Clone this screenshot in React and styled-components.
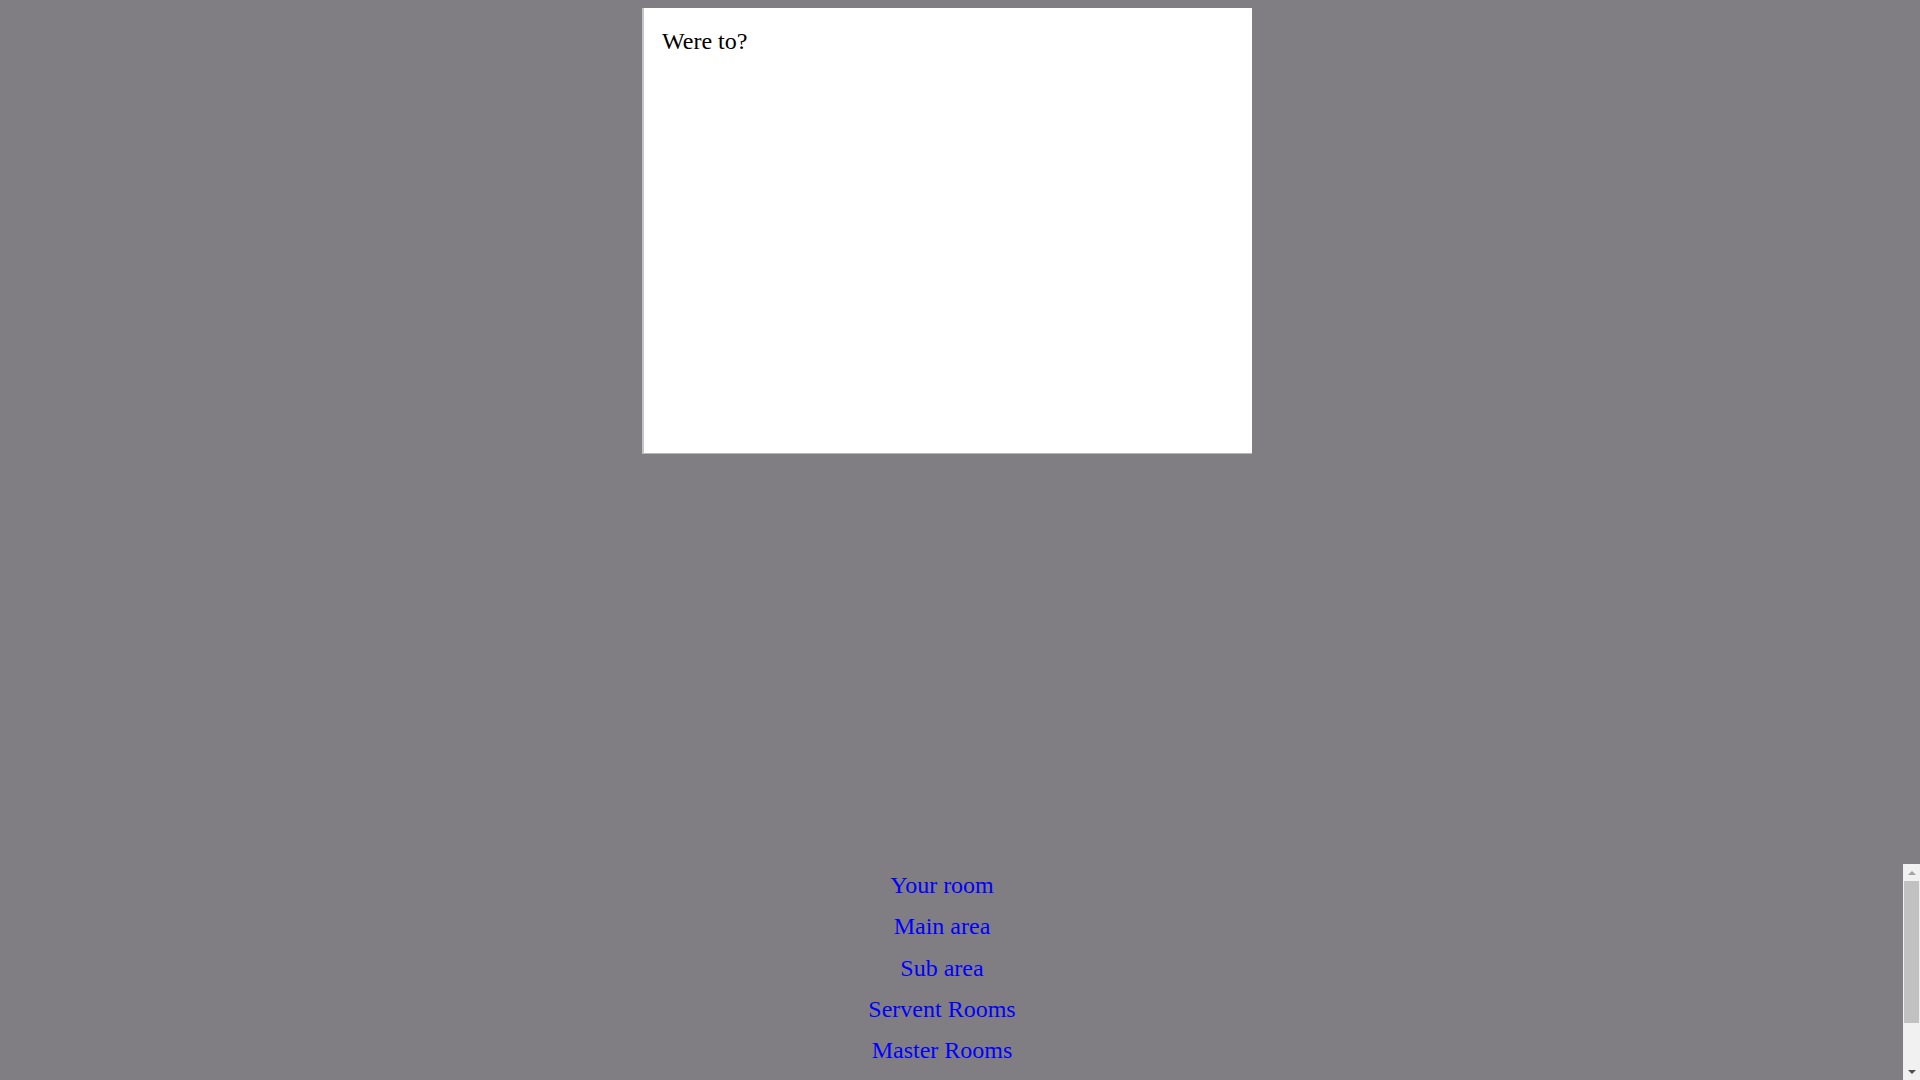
import React from "react";
import styled, { createGlobalStyle } from "styled-components";

const GlobalStyle = createGlobalStyle`
  html, body {
    margin: 0;
    padding: 0;
    height: 100%;
    overflow: hidden;
    background: #807e82;
  }
  #root {
    height: 100%;
  }
`;

const Page = styled.div`
  height: 100vh;
  display: flex;
  flex-direction: column;
  background: #807e82;
  font-family: "Liberation Serif", "Times New Roman", serif;
`;

const Panel = styled.section`
  box-sizing: border-box;
  margin: 8px 0 0 642px;
  width: 610px;
  height: 446px;
  padding: 20px 18px;
  background: #ffffff;
  border-left: 2px solid #c4c4c6;
  border-bottom: 1px solid #b6b5b8;
`;

const Prompt = styled.p`
  margin: 0;
  font-size: 24px;
  color: #000000;
`;

const Spacer = styled.div`
  flex: 1;
`;

const ScrollRegion = styled.div`
  flex: 0 0 216px;
  height: 216px;
  display: flex;
`;

const ScrollContent = styled.nav`
  flex: 1;
  overflow: hidden;
`;

const LinkList = styled.div`
  display: flex;
  flex-direction: column;
  align-items: center;
  padding: 1px 19px 70px 0;
`;

const RoomLink = styled.a`
  font-size: 24px;
  line-height: 41.3px;
  color: #0000ff;
  text-decoration: none;
  cursor: pointer;
`;

const ScrollBar = styled.div`
  flex: 0 0 17px;
  width: 17px;
  display: flex;
  flex-direction: column;
  background: #f1f1f1;
`;

const ArrowButton = styled.div`
  flex: 0 0 17px;
  height: 17px;
  display: flex;
  align-items: center;
  justify-content: center;
  background: #f1f1f1;
`;

const Arrow = styled.span`
  width: 0;
  height: 0;
  border-left: 4px solid transparent;
  border-right: 4px solid transparent;
  ${(p) =>
    p.$up
      ? `border-bottom: 4px solid ${p.$color};`
      : `border-top: 4px solid ${p.$color};`}
`;

const Track = styled.div`
  flex: 1;
  display: flex;
  flex-direction: column;
  padding: 0 1px;
`;

const Thumb = styled.div`
  background: #c1c1c1;
`;

const rooms = ["Your room", "Main area", "Sub area", "Servent Rooms", "Master Rooms"];

export default function App() {
  const thumbRatio = 0.78;
  return (
    <>
      <GlobalStyle />
      <Page>
        <Panel>
          <Prompt>Were to?</Prompt>
        </Panel>
        <Spacer />
        <ScrollRegion>
          <ScrollContent>
            <LinkList>
              {rooms.map((r) => (
                <RoomLink key={r} href="#">
                  {r}
                </RoomLink>
              ))}
            </LinkList>
          </ScrollContent>
          <ScrollBar>
            <ArrowButton>
              <Arrow $up $color="#a3a3a3" />
            </ArrowButton>
            <Track>
              <Thumb style={{ height: `${thumbRatio * 100}%` }} />
            </Track>
            <ArrowButton>
              <Arrow $color="#505050" />
            </ArrowButton>
          </ScrollBar>
        </ScrollRegion>
      </Page>
    </>
  );
}
